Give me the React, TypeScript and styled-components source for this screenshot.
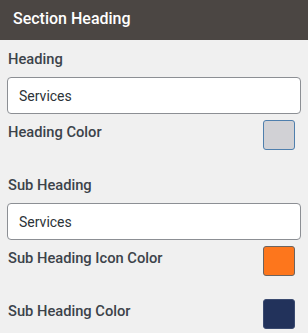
import React from 'react';
import styled, { createGlobalStyle } from 'styled-components';

const GlobalStyle = createGlobalStyle`
  html, body {
    margin: 0;
    padding: 0;
    background: #f0f0f0;
  }
  body {
    font-family: Roboto, 'Liberation Sans', sans-serif;
  }
`;

const Panel = styled.div`
  width: 308px;
  height: 333px;
  background: #f0f0f0;
  overflow: hidden;
`;

const Header = styled.div`
  height: 40px;
  background: #4b4643;
  color: #ffffff;
  display: flex;
  align-items: center;
  padding: 0 13px 4px;
  box-sizing: border-box;
  font-size: 16px;
  font-weight: 500;
`;

const Body = styled.div`
  padding: 0 7px;
  display: flex;
  flex-direction: column;
`;

const Label = styled.div<{ $top: number }>`
  margin-top: ${(p) => p.$top}px;
  height: 20px;
  line-height: 20px;
  font-size: 14.7px;
  font-weight: 500;
  color: #3c434a;
  padding-left: 1px;
`;

const TextInput = styled.input`
  margin-top: 8px;
  height: 37px;
  box-sizing: border-box;
  border: 1px solid #8c8f94;
  border-radius: 4px;
  background: #fff;
  padding: 0 11px;
  font-family: Roboto, 'Liberation Sans', sans-serif;
  font-size: 14px;
  color: #2c3338;
  outline: none;
`;

const ColorRow = styled.div<{ $top: number }>`
  margin-top: ${(p) => p.$top}px;
  display: flex;
  align-items: center;
  justify-content: space-between;
  padding-right: 6px;
`;

const RowLabel = styled.span`
  font-size: 14.7px;
  font-weight: 500;
  color: #3c434a;
  padding-left: 1px;
  align-self: flex-start;
  line-height: 20px;
  margin-top: 2px;
`;

const Swatch = styled.div<{ $color: string; $border: string }>`
  width: 32px;
  height: 30px;
  box-sizing: border-box;
  border-radius: 3px;
  background: ${(p) => p.$color};
  border: 1px solid ${(p) => p.$border};
`;

export default function App() {
  return (
    <Panel>
      <GlobalStyle />
      <Header>Section Heading</Header>
      <Body>
        <Label $top={9}>Heading</Label>
        <TextInput defaultValue="Services" />
        <ColorRow $top={6}>
          <RowLabel>Heading Color</RowLabel>
          <Swatch $color="#d1d1d5" $border="#4f7fad" />
        </ColorRow>
        <Label $top={25}>Sub Heading</Label>
        <TextInput defaultValue="Services" />
        <ColorRow $top={6}>
          <RowLabel>Sub Heading Icon Color</RowLabel>
          <Swatch $color="#fd761c" $border="#6b6460" />
        </ColorRow>
        <ColorRow $top={23}>
          <RowLabel>Sub Heading Color</RowLabel>
          <Swatch $color="#22325b" $border="#3a4a70" />
        </ColorRow>
      </Body>
    </Panel>
  );
}
